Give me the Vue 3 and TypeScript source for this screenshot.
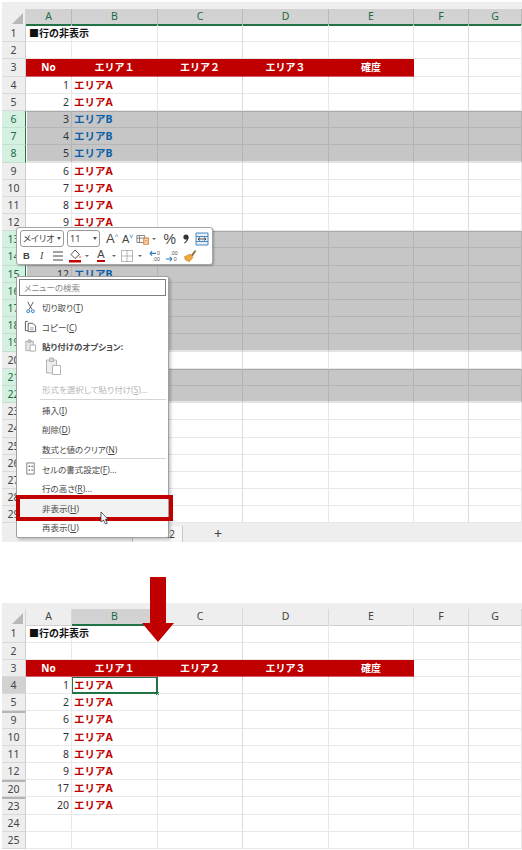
<script setup lang="ts">
interface SheetRow {
  n: number
  kind: 'title' | 'head' | 'data' | 'empty'
  no?: number
  area?: 'A' | 'B'
  sel?: boolean
  selTop?: boolean
  selEnd?: boolean
  active?: boolean
  gap?: boolean
}

interface MenuItem {
  label: string
  key: string
  tail?: string
  icon?: 'cut' | 'copy' | 'paste' | 'format'
  muted?: boolean
  strong?: boolean
  hover?: boolean
  sep?: boolean
  pasteBox?: boolean
}

const columns = ['A', 'B', 'C', 'D', 'E', 'F', 'G']
const headLabels = ['No', 'エリア１', 'エリア２', 'エリア３', '確度']
const selected = [6, 7, 8, 13, 14, 15, 16, 17, 18, 19, 21, 22]

const makeRow = (n: number): SheetRow => {
  if (n === 1) return { n, kind: 'title' }
  if (n === 3) return { n, kind: 'head' }
  const sel = selected.includes(n)
  const base = {
    n,
    sel,
    selTop: sel && !selected.includes(n - 1),
    selEnd: sel && !selected.includes(n + 1),
  }
  if (n < 4 || n > 23) return { ...base, kind: 'empty' }
  return { ...base, kind: 'data', no: n - 3, area: sel ? 'B' : 'A' }
}

// メニューとツールバーの下に隠れる行は中身を出さない
const coveredRow = (n: number) => n === 13 || n === 14 || n > 15
const topRows = Array.from({ length: 29 }, (_, i) => {
  const row = makeRow(i + 1)
  return coveredRow(row.n) ? { ...row, kind: 'empty' as const } : row
})

// 非表示にした後の行
const bottomRows = [1, 2, 3, 4, 5, 9, 10, 11, 12, 20, 23, 24, 25].map((n) => {
  const row = { ...makeRow(n), sel: false, selTop: false, selEnd: false }
  row.active = n === 4
  row.gap = n === 9 || n === 20 || n === 23
  return row
})

const sheets = [
  { id: 'before', rows: topRows, allColumns: true },
  { id: 'after', rows: bottomRows, allColumns: false },
]

const menuItems: MenuItem[] = [
  { label: '切り取り', key: 'T', icon: 'cut' },
  { label: 'コピー', key: 'C', icon: 'copy' },
  { label: '貼り付けのオプション:', key: '', icon: 'paste', strong: true, pasteBox: true },
  { label: '形式を選択して貼り付け', key: 'S', tail: '...', muted: true, sep: true },
  { label: '挿入', key: 'I' },
  { label: '削除', key: 'D' },
  { label: '数式と値のクリア', key: 'N', sep: true },
  { label: 'セルの書式設定', key: 'F', tail: '...', icon: 'format' },
  { label: '行の高さ', key: 'R', tail: '...' },
  { label: '非表示', key: 'H', hover: true },
  { label: '再表示', key: 'U' },
]
</script>

<template>
  <div class="page">
    <section v-for="sheet in sheets" :key="sheet.id" class="sheet" :class="sheet.id">
      <div class="strip"></div>
      <div class="grid-row col-heads">
        <div class="corner"><i></i></div>
        <div
          v-for="col in columns"
          :key="col"
          class="col-head"
          :class="{ on: sheet.allColumns || col === 'B' }"
        >
          {{ col }}
        </div>
      </div>
      <div
        v-for="row in sheet.rows"
        :key="row.n"
        class="grid-row sheet-row"
        :class="{ sel: row.sel, 'sel-top': row.selTop, 'sel-end': row.selEnd }"
      >
        <div class="row-no" :class="{ on: row.sel, cur: row.active, gap: row.gap }">{{ row.n }}</div>
        <div
          v-for="(col, i) in columns"
          :key="col"
          class="cell"
          :class="{
            band: row.kind === 'head' && i < 5,
            num: i === 0,
            active: row.active && i === 1,
          }"
        >
          <span v-if="row.kind === 'title' && i === 0" class="title">■行の非表示</span>
          <span v-else-if="row.kind === 'head' && i < 5">{{ headLabels[i] }}</span>
          <template v-else-if="row.kind === 'data'">
            <span v-if="i === 0">{{ row.no }}</span>
            <span v-if="i === 1" class="area" :class="row.area === 'A' ? 'red' : 'blue'">エリア{{ row.area }}</span>
          </template>
        </div>
      </div>
      <div v-if="sheet.allColumns" class="tabs">
        <span class="tab">Sheet1</span>
        <span class="tab current">Sheet2</span>
        <span class="plus">+</span>
      </div>
    </section>

    <!-- ミニツールバー -->
    <div class="mini">
      <div class="mini-line">
        <div class="combo font">メイリオ<b></b></div>
        <div class="combo size">11<b></b></div>
        <span class="glyph big">A<sup>^</sup></span>
        <span class="glyph small">A<sup>˅</sup></span>
        <svg class="ico fmt" viewBox="0 0 16 14">
          <path d="M1 3h9v8H1zM1 6h9M4 3v8" fill="none" stroke="#777" />
          <path d="M9 6h5v7H9z" fill="#fff" stroke="#d9822b" stroke-width="1.4" />
          <path d="M10 8.500h3M10 10.500h3" stroke="#d9822b" />
        </svg>
        <b class="caret"></b>
        <span class="glyph pct">%</span>
        <svg class="ico comma" viewBox="0 0 8 12">
          <circle cx="4" cy="4" r="2.600" fill="#333" />
          <path d="M6.500 4c0 3-1.500 5-4 6.500l-.5-.8C4 8.500 4.800 7 4.800 5.500z" fill="#333" />
        </svg>
        <svg class="ico merge" viewBox="0 0 14 14">
          <path d="M1 1h12v12H1z" fill="#e4f0fa" stroke="#4a86c0" />
          <path d="M1 4.500h12M1 9.500h12" stroke="#4a86c0" />
          <path d="M3 7h8M3 7l2-1.500M3 7l2 1.500M11 7L9 5.500M11 7L9 8.500" fill="none" stroke="#333" stroke-width=".8" />
        </svg>
      </div>
      <div class="mini-line second">
        <span class="glyph bold">B</span>
        <span class="glyph ital">I</span>
        <svg class="ico align" viewBox="0 0 12 12"><path d="M1 2h10M1 6h10M1 10h10" stroke="#444" /></svg>
        <svg class="ico fill" viewBox="0 0 14 14">
          <path d="M7 1l4.500 4.500L7 9.500 3 5.500z" fill="#fff" stroke="#555" />
          <path d="M12 6.500c1 1.500 1 2.500 0 2.500s-1-1 0-2.500z" fill="#e0702a" />
          <path d="M1 11h12v2.500H1z" fill="#c00000" />
        </svg>
        <b class="caret"></b>
        <span class="glyph under">A</span>
        <b class="caret"></b>
        <svg class="ico borders" viewBox="0 0 14 14">
          <path d="M1.500 1.500h11v11h-11zM7 1.500v11M1.500 7h11" fill="none" stroke="#777" stroke-dasharray="1 1" />
        </svg>
        <b class="caret wide"></b>
        <svg class="ico dec-a" viewBox="0 0 16 14">
          <path d="M1 4h7M1 4l2.500-2.500M1 4l2.500 2.500" fill="none" stroke="#2b78c2" stroke-width="1.200" />
          <text x="9" y="6" class="dec-t">0</text>
          <text x="4" y="13" class="dec-t">.00</text>
        </svg>
        <svg class="ico dec-b" viewBox="0 0 16 14">
          <text x="6" y="6" class="dec-t">.00</text>
          <path d="M1 10.500h7M8 10.500L5.500 8M8 10.500L5.500 13" fill="none" stroke="#2b78c2" stroke-width="1.200" />
          <text x="10" y="13" class="dec-t">0</text>
        </svg>
        <svg class="ico brush" viewBox="0 0 14 14">
          <path d="M8 6l4-5 1.200 1-3.600 5.400z" fill="#8a6a3a" />
          <path d="M1 8l6-3 3 3.500L6 13 4.500 11.500 3.500 12 3 10.500 1.800 10.500 2.400 9z" fill="#f0a63c" stroke="#b9771e" stroke-width=".5" />
        </svg>
      </div>
    </div>

    <!-- 右クリックメニュー -->
    <div class="menu">
      <div class="search">メニューの検索</div>
      <template v-for="item in menuItems" :key="item.label">
        <div class="item" :class="{ muted: item.muted, strong: item.strong, hover: item.hover }">
          <span class="slot">
            <svg v-if="item.icon === 'cut'" viewBox="0 0 14 14">
              <path d="M4 1l4.500 8M10 1L5.500 9" stroke="#555" fill="none" />
              <circle cx="4.500" cy="11" r="1.600" fill="none" stroke="#2b78c2" />
              <circle cx="9.500" cy="11" r="1.600" fill="none" stroke="#2b78c2" />
            </svg>
            <svg v-else-if="item.icon === 'copy'" viewBox="0 0 14 14">
              <path d="M4 1.500H1.500v10H4" fill="none" stroke="#555" />
              <path d="M4.500 3.500h5l3 3v6h-8z" fill="#fff" stroke="#555" />
              <path d="M6.500 8.500h4M6.500 10.500h4" stroke="#777" stroke-width=".7" />
            </svg>
            <svg v-else-if="item.icon === 'paste'" viewBox="0 0 14 14">
              <path d="M2 2.500h8v10H2z" fill="#e8e8e8" stroke="#aaa" />
              <path d="M4.500 1h3v2.500h-3z" fill="#ccc" stroke="#aaa" />
              <path d="M6.500 6.500h6v6.500h-6z" fill="#fff" stroke="#aaa" />
            </svg>
            <svg v-else-if="item.icon === 'format'" viewBox="0 0 14 14">
              <path d="M3 1h8v12H3z" fill="#fff" stroke="#777" />
              <path d="M5 4h1.500v1.500H5zM8 4h1.500v1.500H8zM5 8h1.500v1.500H5zM8 8h1.500v1.500H8z" fill="#555" />
            </svg>
          </span>
          <span>{{ item.label }}<template v-if="item.key">(<u>{{ item.key }}</u>)</template>{{ item.tail }}</span>
        </div>
        <div v-if="item.pasteBox" class="paste-box">
          <svg viewBox="0 0 16 18" width="16" height="18">
            <path d="M1.500 3h10v13h-10z" fill="#ededed" stroke="#b5b5b5" />
            <path d="M4.500 1h4v3.500h-4z" fill="#d5d5d5" stroke="#b5b5b5" />
            <path d="M7.500 8.500h8v9h-8z" fill="#fff" stroke="#b5b5b5" />
          </svg>
        </div>
        <div v-if="item.sep" class="sep"></div>
      </template>
    </div>

    <div class="red-box"></div>
    <svg class="pointer" viewBox="0 0 9 14" width="9" height="14">
      <path d="M1 1v10l2.500-2 2 4 1.800-.8-2-3.900H8z" fill="#fff" stroke="#333" stroke-width=".8" />
    </svg>

    <svg class="arrow" viewBox="0 0 32 65" width="32" height="65">
      <path d="M8 0h16v46h8L16 65 0 46h8z" fill="#c00000" />
    </svg>
  </div>
</template>

<style>
body {
  margin: 0;
  background: #fff;
}
</style>

<style scoped>
.page {
  position: relative;
  width: 522px;
  height: 850px;
  overflow: hidden;
  background: #fff;
  font-family: 'Noto Sans', 'Noto Sans CJK JP', sans-serif;
  color: #333;
}

.sheet {
  margin-left: 2px;
}

.sheet.before {
  padding-top: 2px;
}

.sheet.after {
  margin-top: 61px;
}

.strip {
  height: 7px;
  background: #eeeeee;
}

.sheet.after .strip {
  height: 6px;
}

.grid-row {
  display: grid;
  grid-template-columns: 24px 46px 86px 85px 86px 85px 55px 53px;
}

.col-heads {
  height: 16px;
}

.corner {
  position: relative;
  background: #eeeeee;
  border-right: 1px solid #d5d5d5;
  box-sizing: border-box;
}

.corner i {
  position: absolute;
  right: 2px;
  bottom: 2px;
  width: 0;
  height: 0;
  border-left: 11px solid transparent;
  border-bottom: 11px solid #b8b8b8;
}

.col-head {
  box-sizing: border-box;
  background: #eeeeee;
  border-right: 1px solid #d8d8d8;
  border-bottom: 1px solid #cfcfcf;
  text-align: center;
  font-size: 10.5px;
  line-height: 15px;
  color: #444;
}

.col-head.on {
  background: #d2d2d2;
  border-right-color: #b9b9b9;
  border-bottom: 2px solid #217346;
  color: #1f6a45;
}

.sheet-row {
  height: 17.2px;
}

.row-no {
  box-sizing: border-box;
  background: #eeeeee;
  border-right: 1px solid #cfcfcf;
  border-bottom: 1px solid #d8d8d8;
  text-align: center;
  font-size: 10.5px;
  line-height: 16px;
  color: #444;
}

.row-no.on {
  background: #d3f0e0;
  border-right: 1px solid #217346;
  border-bottom-color: #c3e0d0;
  color: #1f6a45;
}

.row-no.cur {
  background: #d2d2d2;
}

.row-no.gap {
  border-top: 2px solid #b5b5b5;
  line-height: 14px;
}

.cell {
  box-sizing: border-box;
  position: relative;
  padding: 0 2px;
  border-right: 1px solid #e8e8e8;
  border-bottom: 1px solid #e8e8e8;
  font-size: 10.5px;
  line-height: 16px;
  white-space: nowrap;
}

.cell:nth-child(4),
.cell:nth-child(7) {
  border-right-color: #dcdcdc;
}

.cell.num {
  text-align: right;
}

.sel .cell {
  background: #c6c6c6;
  border-right-color: #b4b4b4;
  border-bottom-color: #b4b4b4;
}

.sel-top .cell {
  border-top: 1px solid #a8a8a8;
  line-height: 15px;
}

.sel-end .cell {
  border-bottom: 2px solid #e4e4e4;
}

.sel .cell:nth-child(2) {
  border-left: 1px solid #fff;
}

.cell.band {
  background: #c00000;
  border-right-color: #c00000;
  border-bottom-color: #d9606a;
  color: #fff;
  font-size: 10px;
  font-weight: 700;
  text-align: center;
}

.cell.active {
  box-shadow: inset 0 0 0 1px #217346;
  border-right-color: #217346;
  border-bottom-color: #217346;
}

.cell.active::after {
  content: '';
  position: absolute;
  right: -2px;
  bottom: -2px;
  width: 3px;
  height: 3px;
  background: #217346;
}

.title {
  font-size: 10px;
  font-weight: 700;
  color: #111;
  margin-left: 1px;
}

.area {
  font-weight: 700;
}

.area.red {
  color: #c00000;
}

.area.blue {
  color: #0b5ea8;
}

.tabs {
  display: flex;
  align-items: center;
  height: 19px;
  padding-top: 3px;
  box-sizing: border-box;
  background: #eeeeee;
  font-size: 10px;
  color: #444;
}

.tab {
  box-sizing: border-box;
  width: 43px;
  margin-left: 88px;
  border-right: 1px solid #c8c8c8;
  line-height: 16px;
}

.tab.current {
  width: 50px;
  padding-right: 7px;
  margin-left: 0;
  text-align: right;
  background: #f7f7f7;
}

.plus {
  margin-left: 31px;
  font-size: 14px;
  line-height: 16px;
}

.mini {
  position: absolute;
  left: 16px;
  top: 227px;
  box-sizing: border-box;
  width: 197px;
  height: 38px;
  padding: 2px 3px;
  background: #fff;
  border: 1px solid #a6a6a6;
  border-radius: 3px;
  box-shadow: 1px 1px 2px rgba(0, 0, 0, 0.25);
  font-size: 10px;
}

.mini-line {
  display: flex;
  align-items: center;
  height: 17px;
  gap: 4px;
}

.mini-line.second {
  padding-left: 3px;
  gap: 5px;
}

.combo {
  position: relative;
  box-sizing: border-box;
  height: 17px;
  padding-left: 2px;
  border: 1px solid #9a9a9a;
  border-radius: 3px;
  font-size: 9px;
  font-feature-settings: 'palt';
  line-height: 15px;
  color: #444;
}

.combo b {
  position: absolute;
  right: 2px;
  top: 6px;
  border-left: 2px solid transparent;
  border-right: 2px solid transparent;
  border-top: 3px solid #555;
}

.combo.font {
  width: 44px;
}

.combo.size {
  width: 33px;
  margin-left: -1px;
}

.caret {
  flex: none;
  width: 0;
  height: 0;
  margin-left: -2px;
  border-left: 2px solid transparent;
  border-right: 2px solid transparent;
  border-top: 2.500px solid #666;
}

.caret.wide {
  margin-left: -1px;
}

.ico {
  width: 14px;
  height: 14px;
  flex: none;
}

.glyph {
  flex: none;
  font-family: 'Liberation Sans', sans-serif;
  color: #444;
  line-height: 14px;
}

.glyph sup {
  font-size: 7px;
  color: #2b78c2;
  vertical-align: 4px;
  line-height: 0;
}

.glyph.big {
  font-size: 13px;
  margin-left: 2px;
}

.glyph.small {
  font-size: 11px;
}

.ico.fmt {
  margin-left: -1px;
}

.glyph.pct {
  font-size: 14px;
  margin-left: 3px;
}

.ico.comma {
  width: 8px;
  height: 12px;
  margin-left: 2px;
}

.ico.merge {
  margin-left: 1px;
}

.glyph.bold {
  font-weight: 700;
  font-size: 9.500px;
}

.glyph.ital {
  font-style: italic;
  font-family: 'Liberation Serif', serif;
  font-size: 10px;
  margin-left: 5px;
}

.ico.align {
  width: 12px;
  height: 12px;
  margin-left: 4px;
}

.ico.fill {
  margin-left: -1px;
}

.glyph.under {
  font-size: 11px;
  border-bottom: 2px solid #c00000;
  line-height: 11px;
  margin: 0 4px 0 3px;
}

.ico.borders {
  margin-left: -1px;
}

.ico.dec-a {
  margin-left: 2px;
}

.ico.dec-b {
  margin-left: -3px;
}

.ico.brush {
  margin-left: -1px;
}

.dec-t {
  font: 6px 'Liberation Sans', sans-serif;
  fill: #555;
}

.menu {
  position: absolute;
  left: 16px;
  top: 276px;
  box-sizing: border-box;
  width: 153px;
  height: 262px;
  padding: 2px 2px 0;
  background: #fff;
  border: 1px solid #a0a0a0;
  border-radius: 2px;
  box-shadow: 2px 2px 3px rgba(0, 0, 0, 0.2);
  font-size: 8.500px;
  font-feature-settings: 'palt';
  color: #4a4a4a;
}

.search {
  box-sizing: border-box;
  height: 17px;
  margin-bottom: 1.500px;
  padding-left: 4px;
  border: 1px solid #808080;
  line-height: 15px;
  color: #8a8a8a;
}

.item {
  display: flex;
  align-items: center;
  height: 19.400px;
  margin: 0 -2px;
  padding-left: 7px;
}

.item.strong {
  font-weight: 700;
}

.item.muted {
  color: #b5b5b5;
}

.item.hover {
  background: #f2f2f2;
}

.slot {
  flex: none;
  display: flex;
  align-items: center;
  width: 18px;
}

.slot svg {
  width: 13px;
  height: 13px;
}

.paste-box {
  height: 25px;
  padding: 2px 0 0 26px;
  box-sizing: border-box;
  margin-top: -1px;
}

.sep {
  height: 1px;
  margin-left: 21px;
  background: #d5d5d5;
}

.red-box {
  position: absolute;
  left: 16px;
  top: 495px;
  box-sizing: border-box;
  width: 157px;
  height: 26px;
  border: 4px solid #c00000;
}

.pointer {
  position: absolute;
  left: 100px;
  top: 511px;
}

.arrow {
  position: absolute;
  left: 142px;
  top: 577px;
}
</style>
